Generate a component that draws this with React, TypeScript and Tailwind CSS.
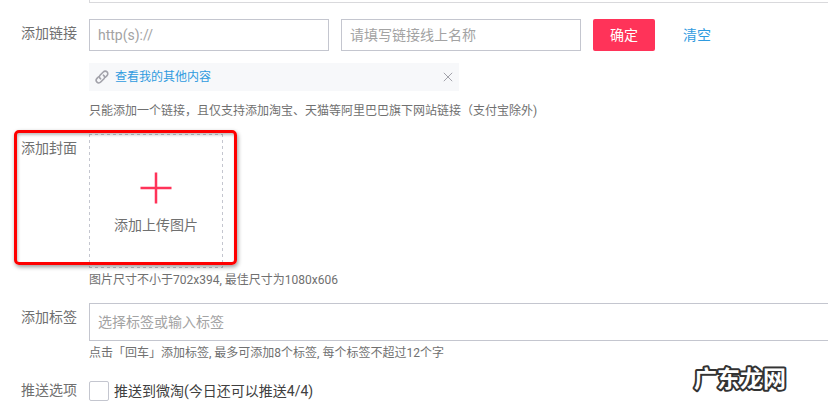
import { useState } from 'react'
import type { ReactNode } from 'react'

interface FormRowProps {
  label: string
  htmlFor?: string
  className?: string
  children: ReactNode
}

function FormRow({ label, htmlFor, className = '', children }: FormRowProps) {
  return (
    <div className={`flex gap-3 ${className}`}>
      <label htmlFor={htmlFor} className="h-7 w-14 shrink-0 text-sm leading-7 text-[#707070]">
        {label}
      </label>
      <div className="min-w-0 flex-1">{children}</div>
    </div>
  )
}

function Hint({ className = '', children }: { className?: string; children: ReactNode }) {
  return <p className={`text-xs leading-[18px] text-[#707070] ${className}`}>{children}</p>
}

function LinkIcon() {
  return (
    <svg
      viewBox="0 0 14 14"
      className="h-3.5 w-3.5 shrink-0"
      fill="none"
      stroke="#a2a2aa"
      strokeWidth="1.6"
      strokeLinecap="round"
      aria-hidden="true"
    >
      <path d="M5.6 8.8C4.2 8 4 6.400 5 5.300L8.300 2C9.400 .9 11 .9 12 1.900S13.100 4.500 12 5.600L10.400 7.200" />
      <path d="M8.400 5.200C9.800 6 10 7.600 9 8.700L5.700 12C4.600 13.100 3 13.100 2 12.100S.9 9.500 2 8.400L3.600 6.800" />
    </svg>
  )
}

function Watermark() {
  return (
    <svg viewBox="0 0 112 40" className="h-10 w-28" role="img" aria-label="广东龙网">
      <text
        x="8"
        y="27"
        className="font-['Noto_Sans_CJK_SC',sans-serif] text-[23px] font-bold [font-style:oblique_10deg]"
        fill="#fff"
        stroke="#333"
        strokeWidth="4"
        strokeLinejoin="round"
        paintOrder="stroke"
      >
        广东龙网
      </text>
    </svg>
  )
}

export default function App() {
  const [url, setUrl] = useState('')
  const [linkName, setLinkName] = useState('')
  const [tags, setTags] = useState('')
  const [hasLink, setHasLink] = useState(true)

  const clearLink = () => {
    setUrl('')
    setLinkName('')
  }

  return (
    <div className="relative overflow-hidden bg-white pb-1 pl-[21px] font-[Roboto,'Noto_Sans_CJK_SC',sans-serif]">
      <div className="ml-[68px] h-[3px] border-b border-l border-[#d9d9dc]" />

      <FormRow label="添加链接" htmlFor="link-url" className="mt-4">
        <div className="flex items-center gap-3">
          <input
            id="link-url"
            type="text"
            value={url}
            onChange={(event) => setUrl(event.target.value)}
            placeholder="http(s)://"
            className="h-8 w-60 border border-[#c4c6cf] px-2 text-sm outline-none placeholder:text-[#a3a3a3]"
          />
          <input
            type="text"
            value={linkName}
            onChange={(event) => setLinkName(event.target.value)}
            placeholder="请填写链接线上名称"
            aria-label="链接线上名称"
            className="h-8 w-60 border border-[#c4c6cf] px-2 text-sm outline-none placeholder:text-[#a3a3a3]"
          />
          <button type="button" className="h-8 shrink-0 rounded-xs bg-[#ff3359] px-[17px] text-sm text-white">
            确定
          </button>
          <button type="button" onClick={clearLink} className="h-8 shrink-0 px-4 text-sm text-[#2f9bdf]">
            清空
          </button>
        </div>

        {hasLink && (
          <div className="mt-3 flex h-7 max-w-[370px] items-center bg-[#f7f8fa] pl-1.5 pr-[3px]">
            <LinkIcon />
            <a href="#contents" className="ml-1.5 flex-1 text-xs text-[#2f9bdf]">
              查看我的其他内容
            </a>
            <button
              type="button"
              onClick={() => setHasLink(false)}
              aria-label="删除链接"
              className="flex h-4 w-4 items-center justify-center"
            >
              <svg viewBox="0 0 10 10" className="h-2.5 w-2.5" stroke="#a2a2aa" aria-hidden="true">
                <path d="M.8 .8 9.200 9.200M9.200 .8 .8 9.200" />
              </svg>
            </button>
          </div>
        )}

        <Hint className="mt-[11px]">
          只能添加一个链接，且仅支持添加淘宝、天猫等阿里巴巴旗下网站链接（支付宝除外)
        </Hint>
      </FormRow>

      <div className="relative mt-[14px]">
        <FormRow label="添加封面" htmlFor="cover-upload">
          <button
            id="cover-upload"
            type="button"
            className="relative flex h-[134px] w-[134px] flex-col items-center pt-[38px] text-sm text-[#707070]"
          >
            <svg className="absolute inset-0 h-full w-full" fill="none" stroke="#c4c6cf" aria-hidden="true">
              <path d="M0 .5H134M133.500 0V134M0 133.500H134M.5 0V134" strokeDasharray="3 3" />
            </svg>
            <svg viewBox="0 0 32 32" className="h-8 w-8" stroke="#ff3359" strokeWidth="2.500" aria-hidden="true">
              <path d="M16 .5V31.500M.5 16H31.500" />
            </svg>
            <span className="mt-[11px] leading-5">添加上传图片</span>
          </button>
          <Hint className="mt-[3px]">图片尺寸不小于702x394, 最佳尺寸为1080x606</Hint>
        </FormRow>
        {/* highlight frame over the upload area */}
        <div className="pointer-events-none absolute -left-[7px] -top-1 h-[135px] w-[223px] rounded-[5px] border-3 border-[#fe0000] shadow-[1px_2px_4px_rgba(0,0,0,0.4),inset_1px_2px_3px_rgba(0,0,0,0.25)]" />
      </div>

      <FormRow label="添加标签" htmlFor="tags" className="mt-[14px]">
        <input
          id="tags"
          type="text"
          value={tags}
          onChange={(event) => setTags(event.target.value)}
          placeholder="选择标签或输入标签"
          className="block h-[38px] w-full border border-r-0 border-[#c4c6cf] px-2 text-sm outline-none placeholder:text-[#a3a3a3]"
        />
        <Hint className="mt-[3px]">点击「回车」添加标签, 最多可添加8个标签, 每个标签不超过12个字</Hint>
      </FormRow>

      <FormRow label="推送选项" htmlFor="push" className="mt-[14px]">
        <div className="mt-[5px] flex items-center">
          <input
            id="push"
            type="checkbox"
            className="h-5 w-5 appearance-none rounded-xs border border-[#c4c6cf] bg-white checked:bg-[#ff3359]"
          />
          <label htmlFor="push" className="ml-[5px] text-sm leading-5 text-[#404040]">
            推送到微淘(今日还可以推送4/4)
          </label>
        </div>
      </FormRow>

      <div className="pointer-events-none absolute bottom-2 right-[30px]">
        <Watermark />
      </div>
    </div>
  )
}
